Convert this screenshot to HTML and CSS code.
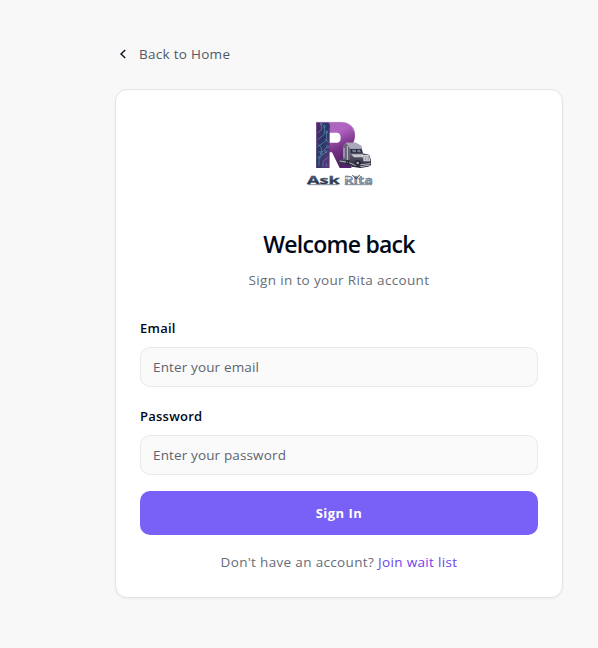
FILE: index.html
```html
<!DOCTYPE html>
<html lang="en">
<head>
<meta charset="utf-8">
<title>Sign in - Ask Rita</title>
<link rel="stylesheet" href="styles.css">
</head>
<body>
<main class="page">
  <a class="back" href="#">
    <svg class="back-icon" viewBox="0 0 16 16" aria-hidden="true"><path d="M10.2 3.9 6 8l4.2 4.1"/></svg>
    <span>Back to Home</span>
  </a>
  <section class="card">
    <svg class="logo" viewBox="-3 0 240 255" role="img" aria-label="Ask Rita">
      <defs>
        <linearGradient id="bowl" x1="0" y1="0" x2="0.35" y2="1">
          <stop offset="0" stop-color="#a267b6"/><stop offset=".35" stop-color="#b264c2"/><stop offset=".7" stop-color="#763084"/><stop offset="1" stop-color="#54216b"/>
        </linearGradient>
        <linearGradient id="stem" x1="0" y1="0" x2="1" y2="1">
          <stop offset="0" stop-color="#552668"/><stop offset=".45" stop-color="#293766"/><stop offset="1" stop-color="#6f337d"/>
        </linearGradient>
        <linearGradient id="metal" x1="0" y1="0" x2="0" y2="1">
          <stop offset="0" stop-color="#9a99aa"/><stop offset=".5" stop-color="#555365"/><stop offset="1" stop-color="#252536"/>
        </linearGradient>
        <linearGradient id="word" x1="0" y1="0" x2="0" y2="1">
          <stop offset="0" stop-color="#7d8797"/><stop offset=".5" stop-color="#34445c"/><stop offset="1" stop-color="#17243a"/>
        </linearGradient>
      </defs>
      <path d="M49 36H122Q164 38 165 76Q165 95 153 110L129 122L155 174H119L96 127H88V174H49Z M88 68V98H112Q122 97 122 83Q122 69 112 68Z" fill="url(#bowl)" fill-rule="evenodd"/>
      <path d="M49 36H85Q92 44 89 56L88 174H49Z" fill="url(#stem)"/>
      <path d="M50 37H126Q156 39 163 65" class="shine"/>
      <g class="circuit">
        <path d="M53 69 64 59V42M53 89 73 73V49M53 111 80 90V66M54 126H66L83 110M57 167V145L78 125M69 171V154L83 143M52 101 64 112V132M76 88 86 97M79 170V160"/>
        <circle cx="64" cy="42" r="3"/><circle cx="73" cy="49" r="3"/><circle cx="80" cy="66" r="3"/><circle cx="83" cy="110" r="3"/><circle cx="78" cy="125" r="3"/><circle cx="58" cy="142" r="3"/><circle cx="64" cy="132" r="3"/>
      </g>
      <path d="M115 151 129 145V108L138 98H168L184 108 189 130 208 134 213 150V166L204 170 181 174 155 170 139 162 116 159Z" fill="url(#metal)"/>
      <path d="M138 98H168L183 108 184 116H151Z" fill="#aaa8b8"/>
      <path d="M129 108 138 100 150 117V149H129Z" fill="#66647a"/>
      <path d="M151 117H184L188 130H153Z" fill="#29283b"/>
      <path d="M156 119H168V127H158ZM172 119H180L183 127H172Z" fill="#737b95"/>
      <path d="M153 133H188L193 142H162Z" fill="#c6c7d1"/>
      <path d="M187 135H207L211 154H190Z" fill="#dedfe4"/>
      <path d="M191 137V152M196 137V152M201 137V152M206 137V152" class="grille"/>
      <path d="M119 153 148 158 165 166 211 161M132 113V143M142 108V151M181 170 210 165" class="trim"/>
      <circle cx="173" cy="159" r="9" fill="#242333"/><circle cx="173" cy="159" r="4" fill="#aaa9b5"/>
      <ellipse cx="143" cy="157" rx="5" ry="7" fill="#242333"/><circle cx="143" cy="157" r="2" fill="#9896a6"/>
      <g class="wordmark">
        <text x="21" y="223" textLength="98" lengthAdjust="spacingAndGlyphs" fill="url(#word)" stroke="#35445b">Ask</text>
        <text x="132" y="223" textLength="87" lengthAdjust="spacingAndGlyphs" fill="#929eae" stroke="#48566c">Rita</text>
      </g>
      <path d="M136 204H153" class="word-shine"/>
      <path d="M157 195 169 207M179 194 169 207" class="spark"/>
      <path d="M24 224H115M134 224H216" class="word-shadow"/>
    </svg>
    <h1>Welcome back</h1>
    <p class="subtitle">Sign in to your Rita account</p>
    <form>
      <label for="email">Email</label>
      <input id="email" class="email" type="email" placeholder="Enter your email">
      <label for="password">Password</label>
      <input id="password" class="password" type="password" placeholder="Enter your password">
      <button type="button">Sign In</button>
    </form>
    <p class="join"><span>Don't have an account?</span> <a href="#">Join wait list</a></p>
  </section>
</main>
</body>
</html>
```

FILE: styles.css
```css
* { box-sizing: border-box; }
body {
  margin: 0;
  min-height: 648px;
  background: #f8f8f8;
  color: #020817;
  font: 14px/20px "Open Sans", "Noto Sans", sans-serif;
}
.page { width: 448px; margin: 0 0 0 115px; padding-top: 44px; }
.back {
  display: flex;
  width: max-content;
  gap: 8px;
  align-items: center;
  height: 20px;
  color: #505866;
  text-decoration: none;
  font-size: 13.5px;
  letter-spacing: .28px;
}
.back-icon { width: 16px; height: 16px; fill: none; stroke: #10121e; stroke-width: 1.4; }
.card {
  height: 509px;
  margin-top: 25px;
  padding: 20px 24px 24px;
  background: #fff;
  border: 1px solid #e2e3eb;
  border-radius: 12px;
  box-shadow: 0 1px 2px #0000000d;
}
.logo { display: block; width: 80px; height: 85px; margin: 0 auto; }
.shine { fill: none; stroke: #bd91ca; stroke-width: 2; }
.circuit { fill: #264769; stroke: #57a3be; stroke-width: 1.8; }
.circuit path { fill: none; }
.grille { fill: none; stroke: #5b5a6a; stroke-width: 1.5; }
.trim { fill: none; stroke: #d5d3df; stroke-width: 2.5; }
.wordmark { font: 700 33px "Open Sans", sans-serif; stroke-width: 1; }
.word-shine { fill: none; stroke: #eef3f7; stroke-width: 4; }
.spark { fill: none; stroke: #344151; stroke-width: 3; }
.word-shadow { fill: none; stroke: #46576c; stroke-width: 2; }
h1 {
  margin: 33px 0 0;
  font-size: 23px;
  line-height: 32px;
  font-weight: 600;
  letter-spacing: -.75px;
  text-align: center;
}
p { margin: 0; text-align: center; font-size: 13.5px; letter-spacing: .34px; color: #666d79; }
.subtitle { margin-top: 10px; }
form { margin-top: 28px; }
label { display: block; font-size: 13px; line-height: 20px; font-weight: 600; letter-spacing: .25px; }
input {
  display: block;
  width: 100%;
  height: 40px;
  margin: 9px 0 19px;
  padding: 0 12px;
  background: #fafafa;
  border: 1px solid #e8e9ee;
  border-radius: 10px;
  font: inherit;
  font-size: 13.5px;
  letter-spacing: .14px;
}
input::placeholder { color: #5d6470; opacity: 1; }
.password { margin-bottom: 16px; }
button {
  display: block;
  width: 100%;
  height: 44px;
  border: 0;
  border-radius: 10px;
  background: #7960f7;
  color: #fff;
  font: 700 13px/20px "Open Sans", "Noto Sans", sans-serif;
  letter-spacing: .5px;
}
.join { margin-top: 17px; }
.join a { color: #6d43ed; text-decoration: none; }
```
